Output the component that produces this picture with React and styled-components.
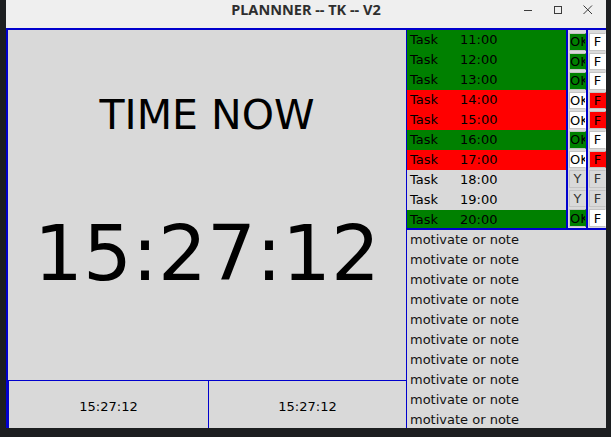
import React from 'react';
import styled, { createGlobalStyle } from 'styled-components';

const BLUE = '#0000cd';
const TONES = { green: '#008000', red: '#ff0000', gray: '#d9d9d9', white: '#ffffff' };

const Global = createGlobalStyle`
  *, *::before, *::after { box-sizing: border-box; }
  html, body { margin: 0; padding: 0; background: #1c1e20; }
  body {
    width: 611px;
    height: 437px;
    overflow: hidden;
    font-family: "DejaVu Sans", "Liberation Sans", sans-serif;
  }
`;

const Window = styled.div`
  margin-left: 6px;
  width: 600px;
  height: 428px;
  display: flex;
  flex-direction: column;
  overflow: hidden;
  background: #d9d9d9;
`;

const TitleBar = styled.header`
  flex: none;
  height: 28px;
  background: #efefef;
  display: grid;
  grid-template-columns: 1fr auto 1fr;
  align-items: start;
`;

const Title = styled.div`
  grid-column: 2;
  font-family: "Noto Sans", "DejaVu Sans", sans-serif;
  font-weight: 700;
  font-size: 14.5px;
  line-height: 19px;
  color: #2e2e2e;
  white-space: nowrap;
`;

const Controls = styled.div`
  grid-column: 3;
  justify-self: end;
  display: flex;
  padding-right: 3px;
`;

const Ctl = styled.svg`
  display: block;
  width: 30px;
  height: 20px;
  stroke: #3c3c3c;
  stroke-width: 1;
  fill: none;
`;

const Body = styled.div`
  flex: 1;
  min-height: 0;
  display: flex;
`;

const LeftPanel = styled.section`
  width: 400px;
  border-left: 2px solid ${BLUE};
  border-top: 2px solid ${BLUE};
  display: flex;
  flex-direction: column;
`;

const Main = styled.div`
  flex: 1;
  display: flex;
  flex-direction: column;
  align-items: center;
  padding-top: 61px;
  color: #000;
`;

const Heading = styled.div`
  font-size: 41px;
  line-height: 48px;
  white-space: nowrap;
`;

const BigClock = styled.div`
  margin-top: 70px;
  font-size: 77px;
  line-height: 90px;
  white-space: nowrap;
`;

const BottomRow = styled.div`
  flex: none;
  height: 48px;
  border-top: 1px solid ${BLUE};
  display: grid;
  grid-template-columns: 200px 1fr;
`;

const SmallClock = styled.div`
  border-left: 1px solid ${BLUE};
  display: flex;
  align-items: center;
  justify-content: center;
  padding-top: 3px;
  font-size: 13px;
  color: #000;
`;

const RightPanel = styled.aside`
  width: 200px;
  display: flex;
  flex-direction: column;
`;

const TaskArea = styled.div`
  flex: none;
  height: 201px;
  display: flex;
`;

const Column = styled.div`
  width: ${p => p.$w}px;
  border-top: 2px solid ${BLUE};
  border-bottom: 1px solid ${BLUE};
  border-left: 1px solid ${BLUE};
  border-right: ${p => (p.$noRight ? 'none' : `1px solid ${BLUE}`)};
  display: flex;
  flex-direction: column;
  overflow: hidden;
  padding-top: ${p => p.$pad || 0}px;
`;

const TaskRow = styled.div`
  flex: none;
  height: 20px;
  background: ${p => TONES[p.$tone]};
  display: flex;
  align-items: center;
  padding: 0 0 2px 3px;
  font-size: 13px;
  color: #000;
  white-space: nowrap;
`;

const TaskName = styled.span`
  display: inline-block;
  width: 50px;
`;

const CellButton = styled.div`
  flex: 1;
  margin: 1px 0 1px 1px;
  border: 1px solid #c4c4c4;
  border-right-color: ${p => (p.$edge ? 'transparent' : '#c4c4c4')};
  background: ${p => TONES[p.$tone]};
  display: flex;
  align-items: center;
  justify-content: ${p => (p.$left ? 'flex-start' : 'center')};
  font-size: 13px;
  color: ${p => (p.$tone === 'gray' ? '#333' : '#000')};
  overflow: hidden;
  white-space: nowrap;
`;

const Notes = styled.div`
  flex: 1;
  min-height: 0;
  border-left: 1px solid ${BLUE};
  border-top: 1px solid ${BLUE};
  overflow: hidden;
`;

const NoteLine = styled.div`
  height: 20px;
  display: flex;
  align-items: center;
  padding: 0 0 2px 3px;
  font-size: 13px;
  color: #111;
  white-space: nowrap;
`;

const tasks = [
  ['11:00', 'green'],
  ['12:00', 'green'],
  ['13:00', 'green'],
  ['14:00', 'red'],
  ['15:00', 'red'],
  ['16:00', 'green'],
  ['17:00', 'red'],
  ['18:00', 'gray'],
  ['19:00', 'gray'],
  ['20:00', 'green'],
];

const okFor = tone =>
  tone === 'green' ? { tone: 'green', text: 'OK', left: true }
  : tone === 'red' ? { tone: 'white', text: 'OK', left: true }
  : { tone: 'gray', text: 'Y', left: false };

const fFor = tone => (tone === 'green' ? 'white' : tone);

export default function App() {
  return (
    <>
      <Global />
      <Window>
        <TitleBar>
          <Title>PLANNNER -- TK -- V2</Title>
          <Controls>
            <Ctl viewBox="0 0 30 20">
              <line x1="11" y1="10.5" x2="19" y2="10.5" />
            </Ctl>
            <Ctl viewBox="0 0 30 20">
              <rect x="11.5" y="6.5" width="7" height="7" />
            </Ctl>
            <Ctl viewBox="0 0 30 20">
              <line x1="10.5" y1="5.5" x2="19" y2="14" />
              <line x1="19" y1="5.5" x2="10.5" y2="14" />
            </Ctl>
          </Controls>
        </TitleBar>
        <Body>
          <LeftPanel>
            <Main>
              <Heading>TIME NOW</Heading>
              <BigClock>15:27:12</BigClock>
            </Main>
            <BottomRow>
              <SmallClock>15:27:12</SmallClock>
              <SmallClock>15:27:12</SmallClock>
            </BottomRow>
          </LeftPanel>
          <RightPanel>
            <TaskArea>
              <Column $w={161}>
                {tasks.map(([t, tone]) => (
                  <TaskRow key={t} $tone={tone}>
                    <TaskName>Task</TaskName>
                    <span>{t}</span>
                  </TaskRow>
                ))}
              </Column>
              <Column $w={20} $pad={2}>
                {tasks.map(([t, tone]) => {
                  const ok = okFor(tone);
                  return (
                    <CellButton key={t} $tone={ok.tone} $left={ok.left} $edge>
                      {ok.text}
                    </CellButton>
                  );
                })}
              </Column>
              <Column $w={19} $pad={2} $noRight>
                {tasks.map(([t, tone]) => (
                  <CellButton key={t} $tone={fFor(tone)} $edge>
                    F
                  </CellButton>
                ))}
              </Column>
            </TaskArea>
            <Notes>
              {Array.from({ length: 10 }, (_, i) => (
                <NoteLine key={i}>motivate or note</NoteLine>
              ))}
            </Notes>
          </RightPanel>
        </Body>
      </Window>
    </>
  );
}
